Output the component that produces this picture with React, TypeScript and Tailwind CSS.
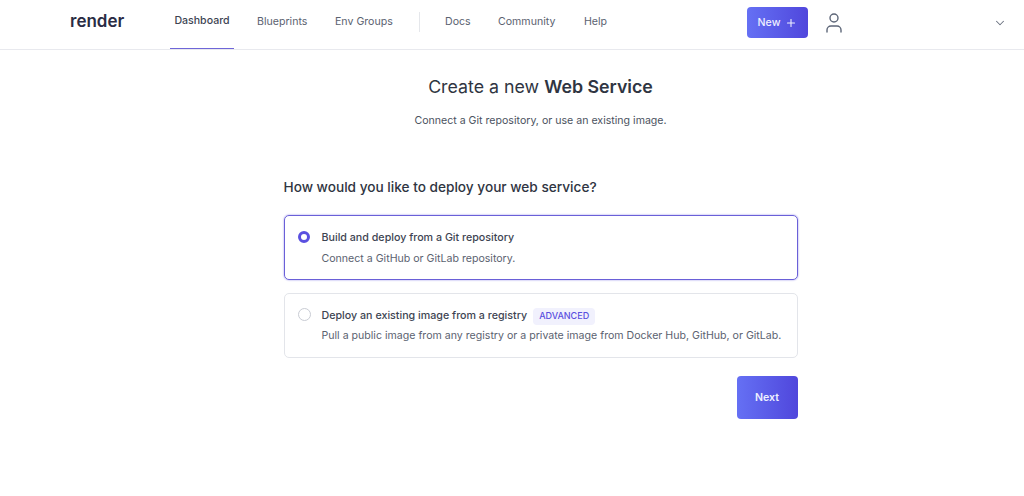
import { User, ChevronDown, Plus } from "lucide-react";

const font = { fontFamily: "Inter, sans-serif" };

function NavItem({ label, active }: { label: string; active?: boolean }) {
  return (
    <a
      className={
        active
          ? "flex h-[49px] w-[64px] shrink-0 items-center justify-center whitespace-nowrap border-b border-[#6f66d8] pb-[6px] text-[10.6px] font-medium text-[#3d4452]"
          : "flex h-[49px] shrink-0 items-center whitespace-nowrap pb-[6px] text-[10.6px] text-[#5b6270]"
      }
    >
      {label}
    </a>
  );
}

export default function App() {
  return (
    <div className="flex h-[496px] w-[1024px] flex-col bg-white" style={font}>
      <header className="flex h-[50px] shrink-0 items-start border-b border-[#e8e9ee]">
        <div className="ml-[70px] flex h-[43px] w-[100px] shrink-0 items-center text-[17px] font-semibold text-[#2a2c44]">
          render
        </div>
        <nav className="flex items-center">
          <NavItem label="Dashboard" active />
          <div className="ml-[23px] w-[51px]"><NavItem label="Blueprints" /></div>
          <div className="ml-[27px] w-[58px]"><NavItem label="Env Groups" /></div>
          <div className="ml-[26px] mr-[25px] mb-[6px] h-[20px] w-px bg-[#e5e7eb]" />
          <div className="w-[26px]"><NavItem label="Docs" /></div>
          <div className="ml-[27px] w-[59px]"><NavItem label="Community" /></div>
          <div className="ml-[27px]"><NavItem label="Help" /></div>
        </nav>
        <div className="ml-auto flex items-center pt-[7px]">
          <button className="flex h-[31px] w-[61px] items-center justify-center gap-[5px] rounded-[4px] bg-gradient-to-r from-[#6570f4] to-[#5046dc] text-[10.6px] font-medium text-[#eef0ff]">
            New <Plus size={12} strokeWidth={2.2} />
          </button>
          <div className="ml-[11px] flex h-[30px] w-[30px] items-center justify-center text-[#5d6678]">
            <User size={24} strokeWidth={1.4} />
          </div>
          <div className="ml-[144px] mr-[17px] text-[#6b7280]">
            <ChevronDown size={14} strokeWidth={1.8} />
          </div>
        </div>
      </header>

      <main className="flex flex-col items-center pl-[57px]">
        <h1 className="mt-[25px] text-[17.8px] leading-[24px] text-[#2f3542]">
          Create a new <span className="font-semibold">Web Service</span>
        </h1>
        <p className="mt-[14px] text-[10.6px] leading-[16px] text-[#4b5260]">
          Connect a Git repository, or use an existing image.
        </p>

        <div className="mt-[48px] flex w-[514px] flex-col">
          <h2 className="text-[13.65px] font-medium leading-[20px] text-[#2f3542]">
            How would you like to deploy your web service?
          </h2>

          <label className="mt-[18px] flex h-[65px] items-start rounded-[5px] border border-[#6a60d8] pl-[13px] pt-[15px] shadow-[0_0_2px_#8d86e6]">
            <span className="flex h-[12px] w-[12px] shrink-0 items-center justify-center rounded-full border-[3px] border-[#5a50e0] bg-white" />
            <span className="ml-[12px] flex flex-col">
              <span className="text-[10.7px] font-medium leading-[14px] text-[#3d4452]">
                Build and deploy from a Git repository
              </span>
              <span className="mt-[7px] text-[10.6px] leading-[14px] text-[#5b6270]">
                Connect a GitHub or GitLab repository.
              </span>
            </span>
          </label>

          <label className="mt-[13px] flex h-[65px] items-start rounded-[5px] border border-[#e3e5ea] pl-[13px] pt-[14px]">
            <span className="h-[13px] w-[13px] shrink-0 rounded-full border border-[#c9ccd4] bg-white" />
            <span className="ml-[11px] flex flex-col">
              <span className="flex h-[16px] items-center whitespace-nowrap text-[10.7px] font-medium text-[#3d4452]">
                Deploy an existing image from a registry
                <span className="ml-[6px] flex h-[17px] items-center rounded-[4px] bg-[#f1f1fd] px-[6px] text-[9px] font-medium text-[#5a50e0]">
                  ADVANCED
                </span>
              </span>
              <span className="mt-[5px] whitespace-nowrap text-[10.6px] leading-[14px] text-[#5b6270]">
                Pull a public image from any registry or a private image from Docker Hub, GitHub, or GitLab.
              </span>
            </span>
          </label>

          <div className="mt-[18px] flex justify-end">
            <button className="h-[43px] w-[61px] rounded-[4px] bg-gradient-to-r from-[#6570f4] to-[#5046dc] text-[10.6px] font-semibold text-[#eef0ff]">
              Next
            </button>
          </div>
        </div>
      </main>
    </div>
  );
}
